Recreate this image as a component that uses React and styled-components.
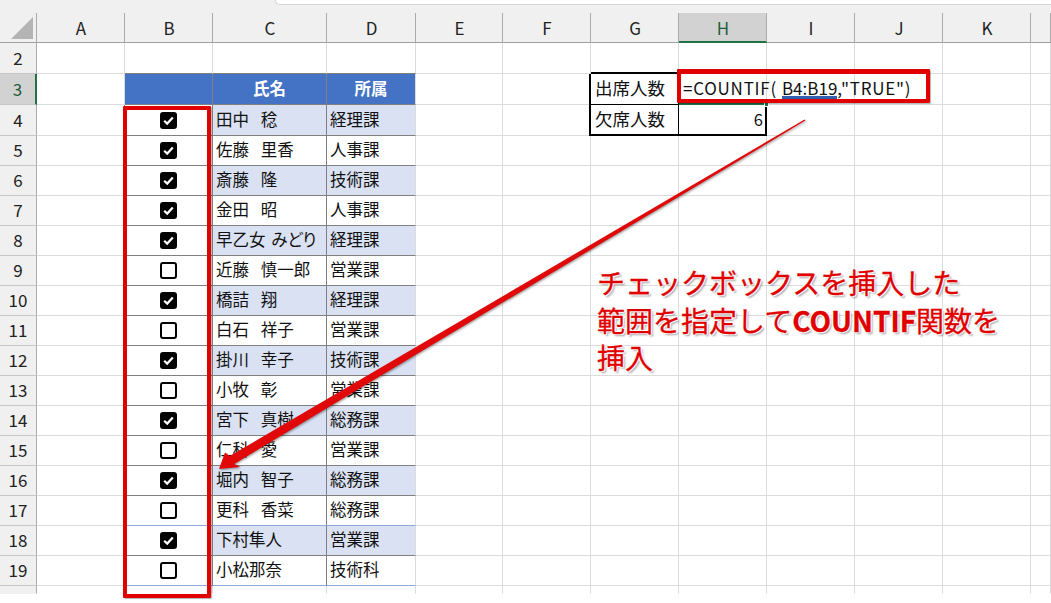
import React from 'react';
import styled, { createGlobalStyle } from 'styled-components';

// --- Constants ---
const COLUMNS = ['A', 'B', 'C', 'D', 'E', 'F', 'G', 'H', 'I', 'J', 'K', ''];
const TRACKS = '37px 88px 88px 114px 89px 87px 88px 88px 88px 88px 88px 88px 20px';
const GRID = '#dcdcdc';
const TABLE = '#808080';
const TABLE_BLUE = '#8ea9db';
const GREEN = '#217346';
const RED = '#e00000';

const MEMBERS = [
  { row: 4, name: '田中 稔', dept: '経理課', on: true },
  { row: 5, name: '佐藤 里香', dept: '人事課', on: true },
  { row: 6, name: '斎藤 隆', dept: '技術課', on: true },
  { row: 7, name: '金田 昭', dept: '人事課', on: true },
  { row: 8, name: '早乙女 みどり', dept: '経理課', on: true, tight: true },
  { row: 9, name: '近藤 慎一郎', dept: '営業課', on: false },
  { row: 10, name: '橋詰 翔', dept: '経理課', on: true },
  { row: 11, name: '白石 祥子', dept: '営業課', on: false },
  { row: 12, name: '掛川 幸子', dept: '技術課', on: true },
  { row: 13, name: '小牧 彰', dept: '営業課', on: false },
  { row: 14, name: '宮下 真樹', dept: '総務課', on: true },
  { row: 15, name: '仁科 愛', dept: '営業課', on: false },
  { row: 16, name: '堀内 智子', dept: '総務課', on: true },
  { row: 17, name: '更科 香菜', dept: '総務課', on: false },
  { row: 18, name: '下村隼人', dept: '営業課', on: true },
  { row: 19, name: '小松那奈', dept: '技術科', on: false },
];

// --- Styled Components ---
const GlobalStyle = createGlobalStyle`
  html, body { margin: 0; padding: 0; background: #fff; overflow: hidden; }
`;

const Sheet = styled.div`
  position: relative; width: 1051px; height: 603px; overflow: hidden; background: #fff;
  font-family: 'Noto Sans CJK JP', 'Noto Sans', sans-serif; font-size: 16.5px; color: #111;
`;

const TopStrip = styled.div` height: 13px; background: #f0f0f0; padding-left: 275px; `;
const FormulaBarEdge = styled.div`
  height: 4px; background: #fff; border: solid #d4d4d4; border-width: 0 0 1px 1px; border-bottom-left-radius: 6px;
`;

const Row = styled.div` display: grid; grid-template-columns: ${TRACKS}; height: ${p => p.$h}px; `;

const HeaderCell = styled.div`
  display: flex; align-items: center; justify-content: center; padding-left: 1px;
  background: ${p => p.$active ? '#d2d2d2' : '#f0f0f0'};
  border-right: 1px solid #ababab; border-bottom: ${p => p.$active ? `2px solid ${GREEN}` : '1px solid #a0a0a0'};
  color: ${p => p.$active ? '#1f5c3a' : '#222'};
  font-size: 17px; line-height: 1;
`;

const Corner = styled(HeaderCell)` align-items: flex-end; justify-content: flex-start; padding: 0 0 3px 11px; `;
const CornerMark = styled.div` width: 22px; height: 22px; background: #b4b4b4; clip-path: polygon(100% 0, 100% 100%, 0 100%); `;

const RowHead = styled.div`
  display: flex; align-items: center; justify-content: center; line-height: 1; font-size: 17px; padding-bottom: 2px;
  background: ${p => p.$active ? '#d2d2d2' : '#f0f0f0'}; color: ${p => p.$active ? '#1f5c3a' : '#222'};
  border-right: ${p => p.$active ? `2px solid ${GREEN}` : '1px solid #ababab'};
  border-bottom: 1px solid ${p => p.$open ? 'transparent' : '#c6c6c6'};
`;

const frameShadow = sides => [
  sides.includes('left') && '-2px 0 0 #000',
  sides.includes('top') && '0 -2px 0 #000',
  sides.includes('right') && 'inset -1px 0 0 #000',
  sides.includes('bottom') && 'inset 0 -1px 0 #000',
].filter(Boolean).join(', ');

const Cell = styled.div`
  position: relative; display: flex; align-items: center; min-width: 0; padding: 0 3px 2px 3px; white-space: nowrap;
  word-spacing: ${p => p.$tight ? 2 : 8}px; line-height: 1; font-feature-settings: 'palt';
  justify-content: ${p => p.$align || 'flex-start'};
  background: ${p => p.$bg || 'transparent'};
  color: ${p => p.$color || 'inherit'};
  font-weight: ${p => p.$bold ? 700 : 400};
  border-right: 1px solid ${p => p.$right || GRID};
  border-bottom: 1px solid ${p => p.$line || GRID};
  ${p => p.$frame && `z-index: 1; border-color: #000; box-shadow: ${frameShadow(p.$frame)};`}
`;

const CheckCell = styled(Cell)` padding: 0; `;

const SummaryLabel = styled(Cell)` padding-left: 4px; font-size: 17.5px; font-feature-settings: normal; `;

const FormulaCell = styled(Cell)`
  z-index: 2; padding-left: 4px; font-size: 17px; letter-spacing: 0.75px;
  font-feature-settings: normal; word-spacing: 0;
  border-right: 1px solid ${GRID}; border-bottom: 2px solid ${GREEN};
  &::after {
    content: ''; position: absolute; right: -3px; bottom: -4px; width: 5px; height: 5px; background: ${GREEN};
    border: 1px solid #fff; box-sizing: border-box;
  }
`;

const RefRange = styled.span` box-shadow: 0 3px 0 #2f5db0; margin-left: 5px; letter-spacing: 0; `;

const Box = styled.div`
  display: flex; align-items: center; justify-content: center; box-sizing: border-box; width: 17px; height: 17px;
  border: 2px solid #000; border-radius: 3px; background: ${p => p.$on ? '#000' : '#fff'};
`;

const FormulaFrame = styled.div`
  position: absolute; z-index: 5; left: 677px; top: 69px; width: 253px; height: 34px; box-sizing: border-box;
  border: solid ${RED}; border-width: 5px 4px 4px; box-shadow: 1px 1px 1px rgba(0,0,0,.3); border-radius: 1px;
`;

const RangeFrame = styled.div`
  position: absolute; z-index: 5; left: 123px; top: 106px; width: 88px; height: 492px; box-sizing: border-box;
  border: 4px solid ${RED}; box-shadow: 1px 1px 1px rgba(0,0,0,.3); border-radius: 1px;
`;

const ArrowLayer = styled.svg`
  position: absolute; z-index: 6; left: 0; top: 0; pointer-events: none;
  filter: drop-shadow(1px 1px 1px rgba(0,0,0,.4));
`;

const Note = styled.div`
  position: absolute; z-index: 7; left: 597px; top: 264px; font-size: 28px; line-height: 37.5px; color: ${RED};
  white-space: nowrap; -webkit-text-stroke: 0.3px ${RED};
  text-shadow: 0 0 2px #fff, 1px 1px 1px #fff, -1px -1px 1px #fff, 1px -1px 1px #fff, -1px 1px 1px #fff,
    2px 2px 2px rgba(0,0,0,.4);
`;
const NoteStrong = styled.strong` font-weight: 700; `;

// --- Parts ---
const CheckBox = ({ on }) => (
  <Box $on={on}>
    {on && (
      <svg width="13" height="13" viewBox="0 0 13 13">
        <path d="M2.2 6.8 L5.2 9.6 L10.8 3.4" fill="none" stroke="#fff" strokeWidth="2.2" />
      </svg>
    )}
  </Box>
);

const Blanks = ({ count }) => Array.from({ length: count }, (_, i) => <Cell key={i} />);

const Summary = ({ row }) => {
  if (row === 3) {
    return (
      <>
        <SummaryLabel $frame="left top">出席人数</SummaryLabel>
        <FormulaCell>
          =COUNTIF(<RefRange>B4:B19</RefRange>,"TRUE")
        </FormulaCell>
      </>
    );
  }
  if (row === 4) {
    return (
      <>
        <SummaryLabel $frame="left bottom">欠席人数</SummaryLabel>
        <Cell $frame="right bottom" $align="flex-end">6</Cell>
      </>
    );
  }
  return <Blanks count={2} />;
};

const MemberRow = ({ member }) => {
  const striped = member.row % 2 === 0;
  const line = member.row === 17 || member.row === 19 ? TABLE_BLUE : TABLE;
  const bg = striped ? '#d9e1f2' : undefined;
  return (
    <Row $h={member.row === 4 ? 31 : 30}>
      <RowHead>{member.row}</RowHead>
      <Cell $right={TABLE} />
      <CheckCell $align="center" $right={TABLE} $line={line}><CheckBox on={member.on} /></CheckCell>
      <Cell $bg={bg} $right={TABLE} $line={line} $tight={member.tight}>{member.name}</Cell>
      <Cell $bg={bg} $line={line}>{member.dept}</Cell>
      <Blanks count={2} />
      <Summary row={member.row} />
      <Blanks count={4} />
    </Row>
  );
};

// --- Main App Component ---
export default function App() {
  return (
    <Sheet>
      <GlobalStyle />
      <TopStrip><FormulaBarEdge /></TopStrip>

      <Row $h={30}>
        <Corner><CornerMark /></Corner>
        {COLUMNS.map((col, i) => <HeaderCell key={i} $active={col === 'H'}>{col}</HeaderCell>)}
      </Row>

      <Row $h={31}>
        <RowHead>2</RowHead>
        <Cell />
        <Cell $line={TABLE} />
        <Cell $line={TABLE} />
        <Cell $line={TABLE} />
        <Blanks count={8} />
      </Row>

      <Row $h={31}>
        <RowHead $active>3</RowHead>
        <Cell />
        <Cell $bg="#4472c4" $right={TABLE} $line={TABLE} />
        <Cell $bg="#4472c4" $right={TABLE} $line={TABLE} $color="#fff" $bold $align="center">氏名</Cell>
        <Cell $bg="#4472c4" $line={TABLE} $color="#fff" $bold $align="center">所属</Cell>
        <Blanks count={2} />
        <Summary row={3} />
        <Blanks count={4} />
      </Row>

      {MEMBERS.map(member => <MemberRow key={member.row} member={member} />)}

      <Row $h={8}>
        <RowHead $open />
        {COLUMNS.map((col, i) => <Cell key={i} $line="transparent" />)}
      </Row>

      <FormulaFrame />
      <RangeFrame />

      <ArrowLayer width="1051" height="603" viewBox="0 0 1051 603">
        <polygon
          points="805.4,120.6 804.6,119.4 229.7,456.1 225,452.5 219,469 240,467 234.3,463.9"
          fill="#e00808"
        />
      </ArrowLayer>

      <Note>
        チェックボックスを挿入した<br />
        範囲を指定して<NoteStrong>COUNTIF</NoteStrong>関数を<br />
        挿入
      </Note>
    </Sheet>
  );
}
